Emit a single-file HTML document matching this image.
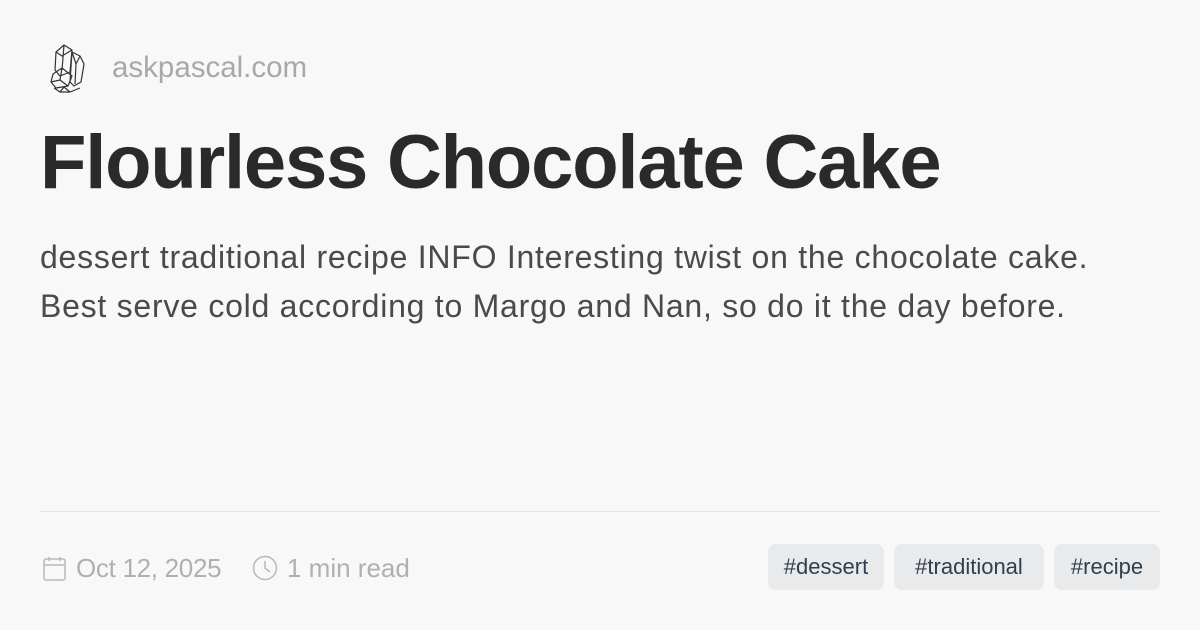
<!DOCTYPE html>
<html><head><meta charset="utf-8"><style>
body{margin:0;width:1200px;height:630px;background:#f9f8f9;font-family:"Liberation Sans","DejaVu Sans",sans-serif;position:relative;overflow:hidden}
.abs{position:absolute;white-space:nowrap}
.site{left:112px;top:51px;font-size:29.5px;color:#a8a8a8}
h1{position:absolute;left:40px;top:119px;margin:0;font-size:76px;font-weight:bold;color:#2a2a2a;letter-spacing:-1.2px;white-space:nowrap}
.desc{left:40px;top:233px;font-size:32px;line-height:49px;color:#4a4a4a;letter-spacing:0.75px}
.line{left:40px;top:511px;width:1120px;height:1px;background:#e6e4e6}
.meta{top:553px;font-size:26px;color:#b0b0b0}
.tag{top:544px;height:46px;line-height:46px;background:#e9eaec;border-radius:8px;color:#2f3f4f;font-size:22px;text-align:center}
</style></head><body>
<svg class="abs" style="left:48px;top:42px" width="40" height="52" viewBox="0 0 40 52" fill="none" stroke="#333" stroke-width="1.2" stroke-linejoin="round">
<path d="M8 10 L16 3 L24 8 L22 30 L12 34 L7 28 Z"/><path d="M16 3 L14 28 M8 10 L14 14 L24 8"/>
<path d="M24 10 L32 14 L36 22 L33 40 L26 44 L22 40 Z"/><path d="M32 14 L28 22 L27 42 M24 10 L28 22"/>
<path d="M5 32 L14 26 L24 34 L20 44 L8 46 L3 40 Z"/><path d="M14 26 L12 38 L20 44 M3 40 L12 38"/>
<path d="M6 46 L12 50 L22 50 L32 46 M12 50 L16 45 L22 50"/>
</svg>
<div class="abs site">askpascal.com</div>
<h1>Flourless Chocolate Cake</h1>
<div class="abs desc">dessert traditional recipe INFO Interesting twist on the chocolate cake.<br>Best serve cold according to Margo and Nan, so do it the day before.</div>
<div class="abs line"></div>
<svg class="abs" style="left:43px;top:556px" width="24" height="26" viewBox="0 0 24 26" fill="none" stroke="#b8b8b8" stroke-width="1.5"><rect x="1" y="3" width="21" height="21" rx="2"/><path d="M1 9 H22 M6 1 V5 M17 1 V5"/></svg>
<div class="abs meta" style="left:76px;letter-spacing:-0.3px">Oct 12, 2025</div>
<svg class="abs" style="left:252px;top:555px" width="26" height="26" viewBox="0 0 26 26" fill="none" stroke="#b8b8b8" stroke-width="1.5"><circle cx="13" cy="13" r="11.5"/><path d="M13 6 V13 L18 17"/></svg>
<div class="abs meta" style="left:287px">1 min read</div>
<div class="abs tag" style="left:768px;width:116px">#dessert</div>
<div class="abs tag" style="left:894px;width:150px">#traditional</div>
<div class="abs tag" style="left:1054px;width:106px">#recipe</div>
</body></html>
